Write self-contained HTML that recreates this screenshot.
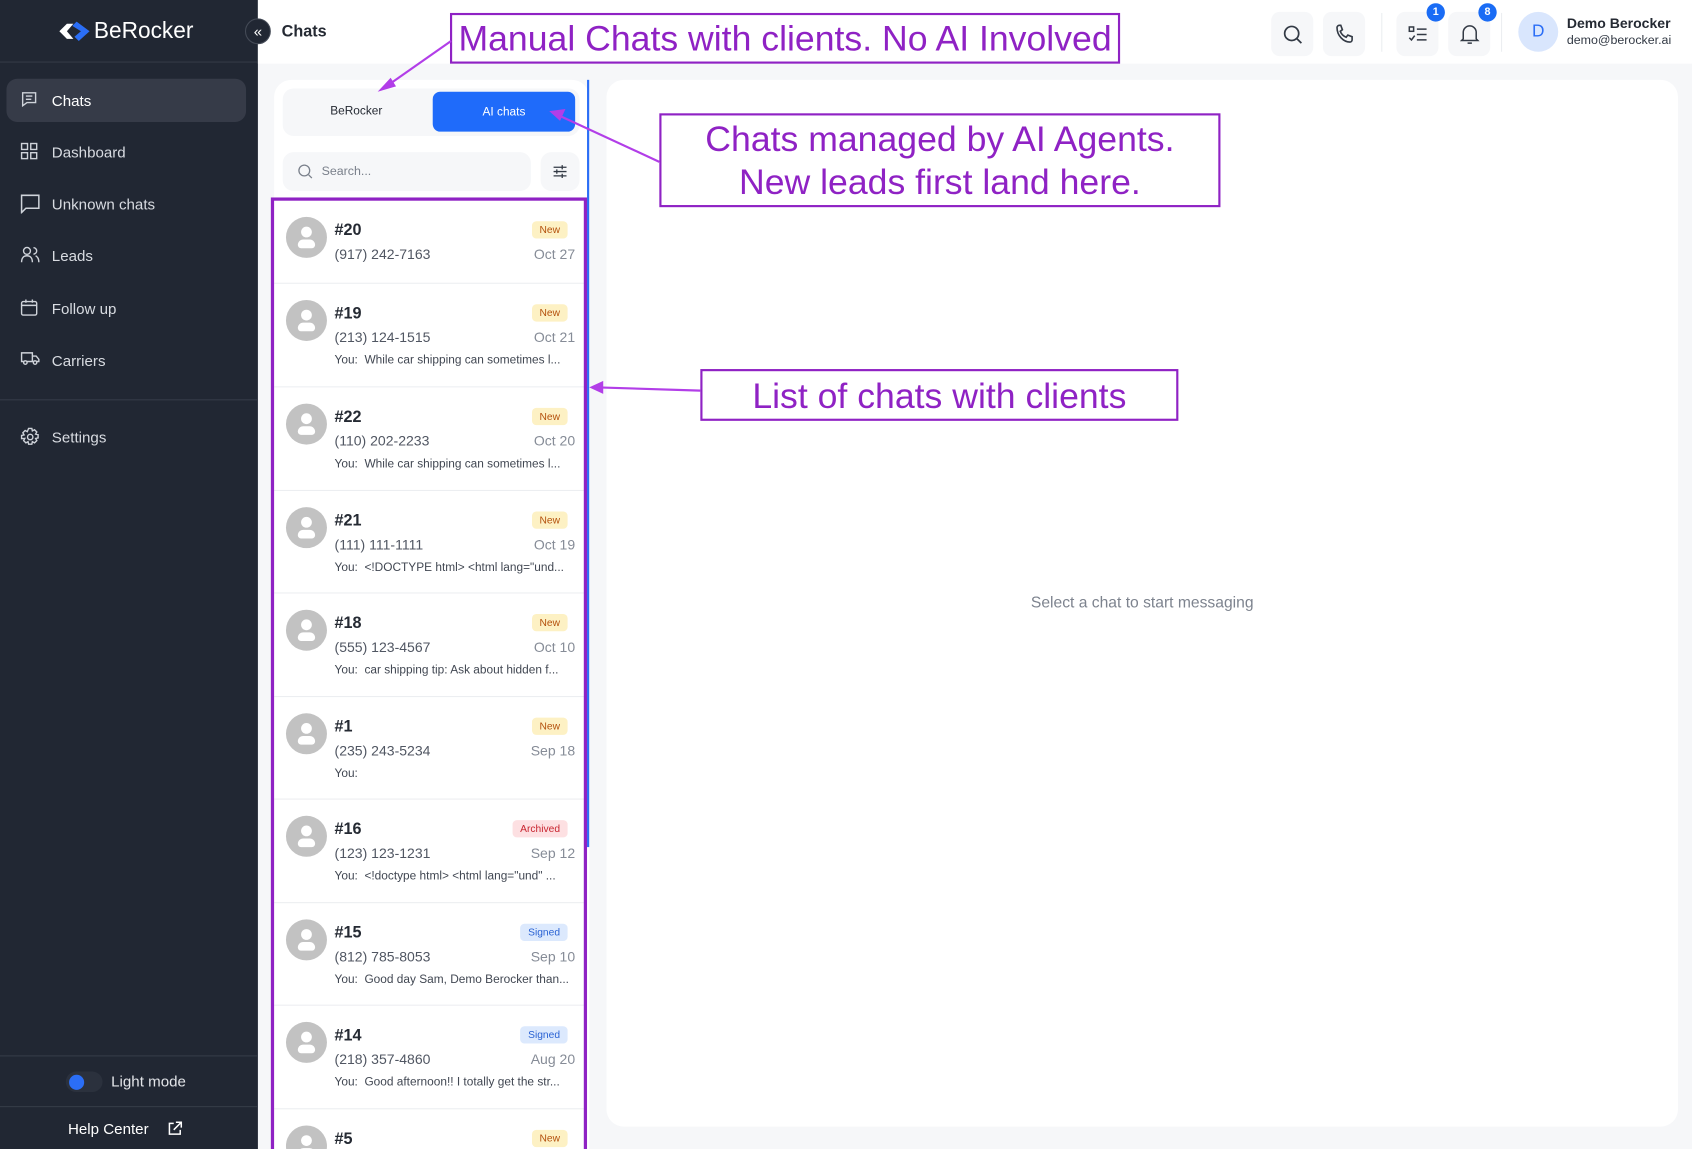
<!DOCTYPE html>
<html><head><meta charset="utf-8"><style>
*{box-sizing:border-box;margin:0;padding:0}
html,body{width:1692px;height:1149px;overflow:hidden;background:#f6f7f9;font-family:"Liberation Sans",sans-serif}
#w{position:absolute;left:0;top:0;width:1568px;height:1065px;transform:scale(1.0791);transform-origin:0 0;background:#f6f7f9;overflow:hidden}
.a{position:absolute}
#side{left:0;top:0;width:239px;height:1065px;background:#212733;color:#d5d8de}
.nav{position:absolute;left:6px;width:222px;height:40px;border-radius:10px;font-size:14px;color:#d8dbe1;display:flex;align-items:center;padding-left:42px}
.nav svg{position:absolute;left:13px;top:11px}
.hr{position:absolute;left:0;width:239px;height:1px;background:#353b47}
#hdr{left:239px;top:0;width:1329px;height:59px;background:#fff}
.ib{position:absolute;top:11px;width:39px;height:41px;border-radius:8px;background:#f6f7f9;display:flex;align-items:center;justify-content:center}
.bd{position:absolute;top:-8px;right:-6px;width:17px;height:17px;border-radius:50%;background:#1a6cf5;color:#fff;font-size:10px;font-weight:bold;display:flex;align-items:center;justify-content:center}
.item{position:absolute;left:254px;width:289px;border-bottom:1px solid #eceef1;overflow:hidden}
.av{position:absolute;left:11px;width:38px;height:38px;border-radius:50%;background:#c2c2c2}
.av:before{content:"";position:absolute;left:14px;top:9px;width:10px;height:10px;border-radius:50%;background:#fff}
.av:after{content:"";position:absolute;left:11px;top:21px;width:16px;height:8px;border-radius:5px 5px 3px 3px;background:#fff}
.t{position:absolute;left:56px;font-size:15px;font-weight:bold;color:#252a33}
.ph{position:absolute;left:56px;font-size:13px;color:#505662}
.dt{position:absolute;right:10px;font-size:13px;color:#868c97}
.pv{position:absolute;left:56px;font-size:11px;color:#414752;white-space:nowrap}
.bg{position:absolute;right:17px;height:16px;padding:0 7px;border-radius:4px;font-size:9.5px;display:flex;align-items:center}
.new{background:#fdf1c4;color:#b4500c}
.arc{background:#fde0e2;color:#c8242f}
.sig{background:#dce9fd;color:#2962d3}
.ann{position:absolute;border:2.5px solid #8f22c4;background:#fff;color:#8f22c4;text-align:center;white-space:nowrap;overflow:hidden}
</style></head><body><div id="w">

<div class="a" id="side">
  <div class="a" style="left:53px;top:17px;display:flex;align-items:center">
    <svg width="32" height="20" viewBox="0 0 32 20"><path d="M2 10 L9 3 L15 3 L9 10 L15 17 L9 17 Z" fill="#fff"/><path d="M14 5 L18 1 L30 10 L20 19 L16 15 L22 10 Z" fill="#2b6ef6"/></svg>
    <span style="font-size:21px;color:#fff;margin-left:2px">BeRocker</span>
  </div>
  <div class="hr" style="top:57px"></div>
  <div class="nav" style="top:73px;background:#363b48;color:#fff"><svg width="16" height="16" viewBox="0 0 16 16" fill="none" stroke="#cfd3da" stroke-width="1.3"><path d="M2 2h12v9H6l-4 3z"/><path d="M5 5h6M5 8h5"/></svg>Chats</div>
  <div class="nav" style="top:121px"><svg width="16" height="16" viewBox="0 0 16 16" fill="none" stroke="#cfd3da" stroke-width="1.3"><rect x="1" y="1" width="5.5" height="5.5"/><rect x="9.5" y="1" width="5.5" height="5.5"/><rect x="1" y="9.5" width="5.5" height="5.5"/><rect x="9.5" y="9.5" width="5.5" height="5.5"/></svg>Dashboard</div>
  <div class="nav" style="top:169px"><svg width="18" height="18" viewBox="0 0 18 18" fill="none" stroke="#cfd3da" stroke-width="1.4"><path d="M1 1h16v12H5l-4 4z"/></svg>Unknown chats</div>
  <div class="nav" style="top:217px"><svg width="18" height="16" viewBox="0 0 18 16" fill="none" stroke="#cfd3da" stroke-width="1.3"><circle cx="6" cy="4.5" r="3.2"/><path d="M1 15c0-4 2-6 5-6s5 2 5 6M12 1.5a3 3 0 010 6M14 9c2 1 3 3 3 6"/></svg>Leads</div>
  <div class="nav" style="top:266px"><svg width="16" height="16" viewBox="0 0 16 16" fill="none" stroke="#cfd3da" stroke-width="1.3"><rect x="1" y="2.5" width="14" height="12.5" rx="1.5"/><path d="M1 6h14M5 0.5v3M11 0.5v3"/></svg>Follow up</div>
  <div class="nav" style="top:314px"><svg width="18" height="14" viewBox="0 0 18 14" fill="none" stroke="#cfd3da" stroke-width="1.3"><path d="M1 2h10v8H1zM11 5h3.5l2.5 3v2h-6"/><circle cx="4.5" cy="11" r="1.6" fill="#212733"/><circle cx="13.5" cy="11" r="1.6" fill="#212733"/></svg>Carriers</div>
  <div class="hr" style="top:370px"></div>
  <div class="nav" style="top:385px"><svg width="18" height="18" viewBox="0 0 18 18" fill="none" stroke="#cfd3da" stroke-width="1.3"><circle cx="9" cy="9" r="2.5"/><path d="M7.5 1h3l.5 2.3 2-1.1 2.1 2.1-1.1 2 2.3.5v3l-2.3.5 1.1 2-2.1 2.1-2-1.1-.5 2.3h-3l-.5-2.3-2 1.1-2.1-2.1 1.1-2L1 10.5v-3l2.3-.5-1.1-2 2.1-2.1 2 1.1z"/></svg>Settings</div>
  <div class="hr" style="top:978px"></div>
  <div class="a" style="left:61px;top:993px;width:34px;height:19px;border-radius:10px;background:#2b313d"></div>
  <div class="a" style="left:64px;top:996px;width:14px;height:14px;border-radius:50%;background:#2b6ef6"></div>
  <div class="a" style="left:103px;top:994px;font-size:14px;color:#e3e5e9">Light mode</div>
  <div class="hr" style="top:1025px"></div>
  <div class="a" style="left:63px;top:1038px;font-size:14px;color:#fff">Help Center</div>
  <svg class="a" style="left:155px;top:1039px" width="14" height="14" viewBox="0 0 14 14" fill="none" stroke="#fff" stroke-width="1.4"><path d="M6 2H2v10h10V8M8 1h5v5M13 1L6 8"/></svg>
</div>

<div class="a" id="hdr">
  <div class="a" style="left:22px;top:21px;font-size:15px;font-weight:bold;color:#252a33">Chats</div>
  <div class="ib" style="left:939px"><svg width="20" height="20" viewBox="0 0 20 20" fill="none" stroke="#333a45" stroke-width="1.6"><circle cx="9" cy="9" r="6.5"/><path d="M14 14l4 4"/></svg></div>
  <div class="ib" style="left:987px"><svg width="20" height="20" viewBox="0 0 20 20" fill="none" stroke="#333a45" stroke-width="1.5"><path d="M3 3.5c0-1 1-2 2-2h1.5l1.5 4-2 1.5c1 2.5 3 4.5 5.5 5.5l1.5-2 4 1.5V15c0 1-1 2-2 2C9 17 3 11 3 3.5z"/></svg></div>
  <div class="a" style="left:1041px;top:12px;width:1px;height:36px;background:#eceef1"></div>
  <div class="ib" style="left:1055px"><svg width="18" height="16" viewBox="0 0 18 16" fill="none" stroke="#333a45" stroke-width="1.4"><rect x="1" y="1" width="4" height="4"/><path d="M1 11l2 2 3-4M8 3h9M8 8h9M8 13h9"/></svg><div class="bd">1</div></div>
  <div class="ib" style="left:1103px"><svg width="18" height="20" viewBox="0 0 18 20" fill="none" stroke="#333a45" stroke-width="1.4"><path d="M3 14V8a6 6 0 0112 0v6l1.5 1.5h-15zM7 18h4"/></svg><div class="bd">8</div></div>
  <div class="a" style="left:1152px;top:12px;width:1px;height:36px;background:#eceef1"></div>
  <div class="a" style="left:1168px;top:11px;width:37px;height:37px;border-radius:50%;background:#d9e6fd;color:#2b6ef6;font-size:16px;display:flex;align-items:center;justify-content:center">D</div>
  <div class="a" style="left:1213px;top:14px;font-size:13px;font-weight:bold;color:#252a33">Demo Berocker</div>
  <div class="a" style="left:1213px;top:32px;font-size:11.5px;color:#333a45">demo@berocker.ai</div>
</div>
<div class="a" style="left:227px;top:17px;width:24px;height:24px;border-radius:50%;background:#212733;border:1px solid #444a56;color:#fff;font-size:14px;display:flex;align-items:center;justify-content:center">«</div>

<div class="a" style="left:254px;top:74px;width:292px;height:991px;background:#fff;border-radius:16px 16px 0 0"></div>
<div class="a" style="left:262px;top:82px;width:275px;height:44px;background:#f6f7f9;border-radius:10px"></div>
<div class="a" style="left:306px;top:97px;font-size:11px;color:#252a33">BeRocker</div>
<div class="a" style="left:401px;top:85px;width:132px;height:37px;background:#1f6bfa;border-radius:7px;color:#fff;font-size:11px;display:flex;align-items:center;justify-content:center">AI chats</div>
<div class="a" style="left:262px;top:141px;width:230px;height:36px;background:#f6f7f9;border-radius:10px"></div>
<svg class="a" style="left:276px;top:152px" width="14" height="14" viewBox="0 0 14 14" fill="none" stroke="#7a808b" stroke-width="1.2"><circle cx="6" cy="6" r="5"/><path d="M10 10l3 3"/></svg>
<div class="a" style="left:298px;top:153px;font-size:11.5px;color:#7a808b">Search...</div>
<div class="a" style="left:501px;top:141px;width:36px;height:36px;background:#f6f7f9;border-radius:10px"></div>
<svg class="a" style="left:512px;top:152px" width="14" height="14" viewBox="0 0 14 14" fill="none" stroke="#333a45" stroke-width="1.2"><path d="M1 3h12M1 7h12M1 11h12M9 1v4M4 5v4M9 9v4"/></svg>
<div class="a" style="left:544px;top:74px;width:2px;height:711px;background:#2b6ef6"></div>

<div class="item" style="top:183px;height:80px"><div class="av" style="top:18px"></div><div class="t" style="top:22px">#20</div><div class="bg new" style="top:22px">New</div><div class="ph" style="top:45px">(917) 242-7163</div><div class="dt" style="top:45px">Oct 27</div></div>
<div class="item" style="top:263px;height:96px"><div class="av" style="top:15px"></div><div class="t" style="top:19px">#19</div><div class="bg new" style="top:19px">New</div><div class="ph" style="top:42px">(213) 124-1515</div><div class="dt" style="top:42px">Oct 21</div><div class="pv" style="top:65px">You:&nbsp; While car shipping can sometimes l...</div></div>
<div class="item" style="top:359px;height:96px"><div class="av" style="top:15px"></div><div class="t" style="top:19px">#22</div><div class="bg new" style="top:19px">New</div><div class="ph" style="top:42px">(110) 202-2233</div><div class="dt" style="top:42px">Oct 20</div><div class="pv" style="top:65px">You:&nbsp; While car shipping can sometimes l...</div></div>
<div class="item" style="top:455px;height:95px"><div class="av" style="top:15px"></div><div class="t" style="top:19px">#21</div><div class="bg new" style="top:19px">New</div><div class="ph" style="top:42px">(111) 111-1111</div><div class="dt" style="top:42px">Oct 19</div><div class="pv" style="top:65px">You:&nbsp; &lt;!DOCTYPE html&gt; &lt;html lang="und...</div></div>
<div class="item" style="top:550px;height:96px"><div class="av" style="top:15px"></div><div class="t" style="top:19px">#18</div><div class="bg new" style="top:19px">New</div><div class="ph" style="top:42px">(555) 123-4567</div><div class="dt" style="top:42px">Oct 10</div><div class="pv" style="top:65px">You:&nbsp; car shipping tip: Ask about hidden f...</div></div>
<div class="item" style="top:646px;height:95px"><div class="av" style="top:15px"></div><div class="t" style="top:19px">#1</div><div class="bg new" style="top:19px">New</div><div class="ph" style="top:42px">(235) 243-5234</div><div class="dt" style="top:42px">Sep 18</div><div class="pv" style="top:65px">You:</div></div>
<div class="item" style="top:741px;height:96px"><div class="av" style="top:15px"></div><div class="t" style="top:19px">#16</div><div class="bg arc" style="top:19px">Archived</div><div class="ph" style="top:42px">(123) 123-1231</div><div class="dt" style="top:42px">Sep 12</div><div class="pv" style="top:65px">You:&nbsp; &lt;!doctype html&gt; &lt;html lang="und" ...</div></div>
<div class="item" style="top:837px;height:95px"><div class="av" style="top:15px"></div><div class="t" style="top:19px">#15</div><div class="bg sig" style="top:19px">Signed</div><div class="ph" style="top:42px">(812) 785-8053</div><div class="dt" style="top:42px">Sep 10</div><div class="pv" style="top:65px">You:&nbsp; Good day Sam, Demo Berocker than...</div></div>
<div class="item" style="top:932px;height:96px"><div class="av" style="top:15px"></div><div class="t" style="top:19px">#14</div><div class="bg sig" style="top:19px">Signed</div><div class="ph" style="top:42px">(218) 357-4860</div><div class="dt" style="top:42px">Aug 20</div><div class="pv" style="top:65px">You:&nbsp; Good afternoon!! I totally get the str...</div></div>
<div class="item" style="top:1028px;height:37px;border:none"><div class="av" style="top:15px"></div><div class="t" style="top:19px">#5</div><div class="bg new" style="top:19px">New</div></div>
<div class="a" style="left:251px;top:183px;width:293px;height:890px;border:3px solid #8f22c4"></div>

<div class="a" style="left:562px;top:74px;width:993px;height:970px;background:#fff;border-radius:16px"></div>
<div class="a" style="left:562px;top:551px;width:993px;text-align:center;font-size:14.5px;color:#7d838e">Select a chat to start messaging</div>

<div class="ann" style="left:417px;top:12px;width:621px;height:47px;font-size:33px;line-height:44px">Manual Chats with clients. No AI Involved</div>
<div class="ann" style="left:611px;top:105px;width:520px;height:87px;font-size:33px;line-height:40px;padding-top:2px">Chats managed by AI Agents.<br>New leads first land here.</div>
<div class="ann" style="left:649px;top:342px;width:443px;height:48px;font-size:33px;line-height:45px">List of chats with clients</div>
<svg class="a" style="left:0;top:0" width="1568" height="1065">
<g stroke="#b23ee8" stroke-width="2" fill="#b23ee8">
<line x1="418" y1="38" x2="358" y2="80"/><polygon points="350,85 362,72 367,80" stroke="none"/>
<line x1="611" y1="150" x2="518" y2="107"/><polygon points="509,103 524,101 519,112" stroke="none"/>
<line x1="649" y1="362" x2="555" y2="359"/><polygon points="546,359 559,353 559,365" stroke="none"/>
</g></svg>
</div></body></html>
